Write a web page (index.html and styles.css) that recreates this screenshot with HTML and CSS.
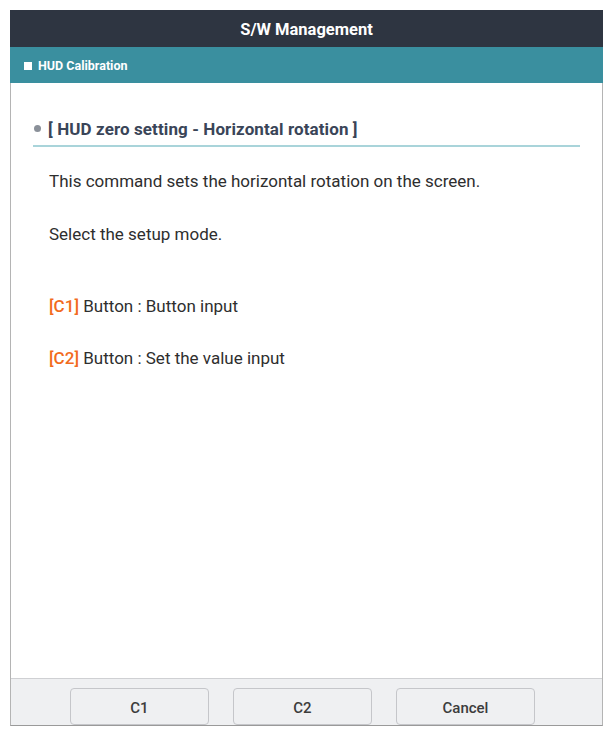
FILE: index.html
```html
<!DOCTYPE html>
<html>
<head>
<meta charset="utf-8">
<link rel="stylesheet" href="styles.css">
</head>
<body>
<div class="frame">
  <div class="titlebar">S/W Management</div>
  <div class="subbar"><span class="square"></span><span class="subtitle">HUD Calibration</span></div>
  <div class="content">
    <div class="heading"><span class="dot"></span><span class="heading-text">[ HUD zero setting - Horizontal rotation ]</span></div>
    <p class="line first">This command sets the horizontal rotation on the screen.</p>
    <p class="line second">Select the setup mode.</p>
    <p class="line third"><span class="key">[C1]</span> Button : Button input</p>
    <p class="line fourth"><span class="key">[C2]</span> Button : Set the value input</p>
  </div>
  <div class="footer">
    <button class="btn">C1</button>
    <button class="btn">C2</button>
    <button class="btn">Cancel</button>
  </div>
</div>
</body>
</html>
```
FILE: styles.css
```css
html, body {
  margin: 0;
  padding: 0;
  background: #ffffff;
}
body {
  font-family: Roboto, "Liberation Sans", sans-serif;
}
.frame {
  margin: 10px 0 0 10px;
  width: 593px;
  height: 716px;
  box-sizing: border-box;
  border-left: 1px solid #b4b4b4;
  border-right: 1px solid #b4b4b4;
  border-bottom: 1px solid #9a9a9a;
  display: flex;
  flex-direction: column;
}
.titlebar {
  height: 37px;
  margin: 0 -1px;
  padding-top: 2px;
  box-sizing: border-box;
  background: #2e3541;
  color: #ffffff;
  font-weight: 700;
  font-size: 16.5px;
  display: flex;
  align-items: center;
  justify-content: center;
}
.subbar {
  height: 36px;
  margin: 0 -1px;
  padding-top: 1px;
  box-sizing: border-box;
  background: #3a8f9f;
  color: #ffffff;
  display: flex;
  align-items: center;
  padding-left: 14px;
}
.square {
  width: 8px;
  height: 8px;
  background: #ffffff;
  margin-right: 6px;
}
.subtitle {
  font-weight: 700;
  font-size: 12.5px;
}
.content {
  flex: 1;
  padding: 0 22px;
}
.heading {
  margin-top: 32px;
  height: 32px;
  padding-bottom: 3px;
  box-sizing: border-box;
  border-bottom: 2px solid #a9d4da;
  display: flex;
  align-items: center;
}
.dot {
  width: 7px;
  height: 7px;
  border-radius: 50%;
  background: #8a9099;
  margin-left: 1px;
  margin-right: 7px;
}
.heading-text {
  font-weight: 700;
  font-size: 17px;
  color: #3a4558;
  letter-spacing: 0.1px;
}
.line {
  margin: 0;
  padding-left: 16px;
  font-size: 17px;
  color: #2e2e2e;
  line-height: 20px;
}
.first { margin-top: 24px; }
.second { margin-top: 33px; }
.third { margin-top: 52px; }
.fourth { margin-top: 32px; }
.key {
  color: #f26b1d;
  font-weight: 500;
}
.footer {
  height: 47px;
  box-sizing: border-box;
  border-top: 1px solid #cfd0d3;
  background: #eff0f2;
  display: flex;
  align-items: flex-end;
  padding-left: 59px;
  gap: 24px;
}
.btn {
  width: 139px;
  height: 37px;
  box-sizing: border-box;
  border: 1px solid #c5c6ca;
  border-radius: 4px;
  background: #eff0f2;
  font-family: Roboto, "Liberation Sans", sans-serif;
  font-weight: 500;
  font-size: 15px;
  color: #3c3c3c;
  padding: 2px 0 0 0;
}
```
